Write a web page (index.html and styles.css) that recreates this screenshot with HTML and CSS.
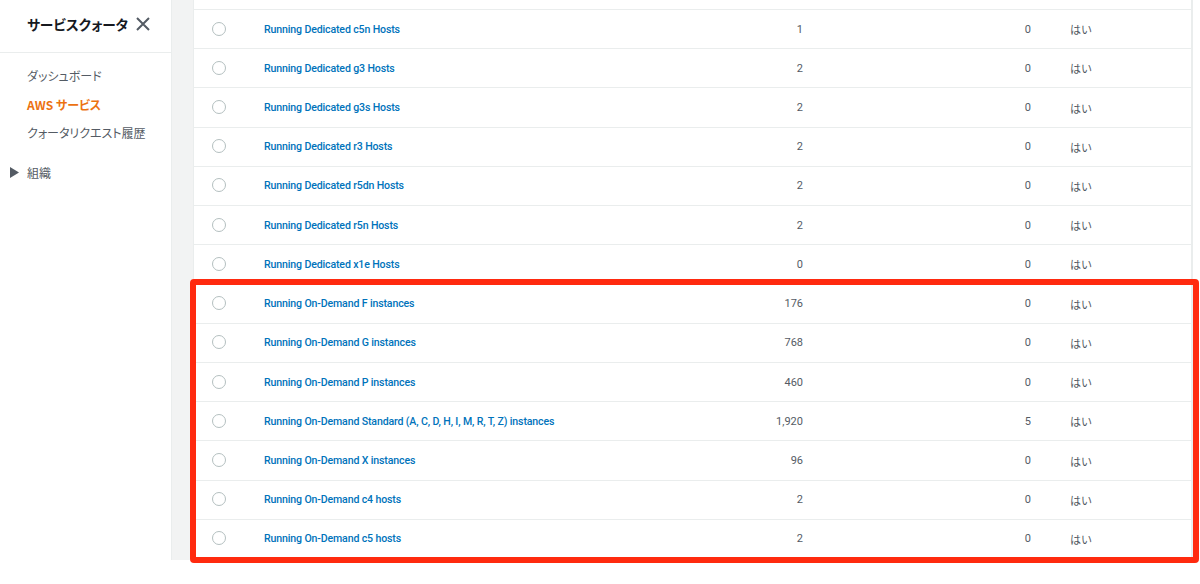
FILE: index.html
```html
<!DOCTYPE html>
<html lang="ja">
<head>
<meta charset="utf-8">
<title>サービスクォータ</title>
<link rel="stylesheet" href="styles.css">
</head>
<body>
<div class="frame">
  <aside class="sidebar">
    <div class="side-head">
      <h2 class="side-title">サービスクォータ</h2>
      <svg class="close" width="14" height="14" viewBox="0 0 14 14"><path d="M1 1L13 13M13 1L1 13" stroke="#545b64" stroke-width="2" fill="none"/></svg>
    </div>
    <nav class="side-nav">
      <a class="nav-item">ダッシュボード</a>
      <a class="nav-item active">AWS サービス</a>
      <a class="nav-item">クォータリクエスト履歴</a>
    </nav>
    <div class="side-group">
      <svg class="caret" width="9" height="11" viewBox="0 0 9 11"><path d="M0 0L9 5.5L0 11Z" fill="#545b64"/></svg>
      <span>組織</span>
    </div>
  </aside>
  <main class="content">
    <div class="card">
      <div class="rows">
        <div class="row"><span class="radio"></span><a class="name">Running Dedicated c5n Hosts</a><span class="num">1</span><span class="num">0</span><span class="adj">はい</span></div>
        <div class="row"><span class="radio"></span><a class="name">Running Dedicated g3 Hosts</a><span class="num">2</span><span class="num">0</span><span class="adj">はい</span></div>
        <div class="row"><span class="radio"></span><a class="name">Running Dedicated g3s Hosts</a><span class="num">2</span><span class="num">0</span><span class="adj">はい</span></div>
        <div class="row"><span class="radio"></span><a class="name">Running Dedicated r3 Hosts</a><span class="num">2</span><span class="num">0</span><span class="adj">はい</span></div>
        <div class="row"><span class="radio"></span><a class="name">Running Dedicated r5dn Hosts</a><span class="num">2</span><span class="num">0</span><span class="adj">はい</span></div>
        <div class="row"><span class="radio"></span><a class="name">Running Dedicated r5n Hosts</a><span class="num">2</span><span class="num">0</span><span class="adj">はい</span></div>
        <div class="row"><span class="radio"></span><a class="name">Running Dedicated x1e Hosts</a><span class="num">0</span><span class="num">0</span><span class="adj">はい</span></div>
        <div class="row"><span class="radio"></span><a class="name">Running On-Demand F instances</a><span class="num">176</span><span class="num">0</span><span class="adj">はい</span></div>
        <div class="row"><span class="radio"></span><a class="name">Running On-Demand G instances</a><span class="num">768</span><span class="num">0</span><span class="adj">はい</span></div>
        <div class="row"><span class="radio"></span><a class="name">Running On-Demand P instances</a><span class="num">460</span><span class="num">0</span><span class="adj">はい</span></div>
        <div class="row"><span class="radio"></span><a class="name">Running On-Demand Standard (A, C, D, H, I, M, R, T, Z) instances</a><span class="num">1,920</span><span class="num">5</span><span class="adj">はい</span></div>
        <div class="row"><span class="radio"></span><a class="name">Running On-Demand X instances</a><span class="num">96</span><span class="num">0</span><span class="adj">はい</span></div>
        <div class="row"><span class="radio"></span><a class="name">Running On-Demand c4 hosts</a><span class="num">2</span><span class="num">0</span><span class="adj">はい</span></div>
        <div class="row"><span class="radio"></span><a class="name">Running On-Demand c5 hosts</a><span class="num">2</span><span class="num">0</span><span class="adj">はい</span></div>
      </div>
    </div>
  </main>
  <div class="highlight"></div>
</div>
</body>
</html>
```

FILE: styles.css
```css
* { box-sizing: border-box; }

html, body {
  margin: 0;
  background: #ffffff;
}

body {
  font-family: Roboto, "Noto Sans CJK JP", sans-serif;
  color: #16191f;
  width: 1200px;
  height: 584px;
  overflow: hidden;
}

.frame {
  position: relative;
  display: flex;
  width: 1193px;
  height: 560px;
}

/* side navigation */
.sidebar {
  width: 172px;
  flex: none;
  background: #ffffff;
  border-right: 1px solid #eaeded;
}

.side-head {
  height: 53px;
  display: flex;
  align-items: center;
  padding: 0 21px 5px 27px;
  border-bottom: 1px solid #eaeded;
}

.side-title {
  margin: 0;
  white-space: nowrap;
  font-family: "Noto Sans CJK JP", sans-serif;
  font-feature-settings: "palt";
  font-size: 13.7px;
  font-weight: 700;
  color: #16191f;
}

.close { display: block; margin: 1px 0 0 auto; flex: none; }

.side-nav {
  display: flex;
  flex-direction: column;
  padding: 9px 0 0 27px;
}

.nav-item {
  font-family: "Noto Sans CJK JP", sans-serif;
  font-feature-settings: "palt";
  font-size: 12px;
  line-height: 28.5px;
  color: #545b64;
}

.nav-item.active {
  color: #ec7211;
  font-weight: 700;
}

.side-group {
  display: flex;
  align-items: center;
  padding: 16px 0 0 10px;
  font-family: "Noto Sans CJK JP", sans-serif;
  font-size: 12px;
  color: #545b64;
  line-height: 18px;
}

.side-group .caret { margin-right: 8px; }

/* main area */
.content {
  flex: 1;
  background: #f2f3f3;
  padding-left: 21px;
  display: flex;
}

.card {
  flex: 1;
  background: #ffffff;
  border-left: 1px solid #eaeded;
  border-right: 2px solid #eaeded;
  padding-top: 9px;
}

.row {
  display: grid;
  grid-template-columns: 70px 439px 100px 228px 1fr;
  align-items: center;
  height: 39.23px;
  border-top: 1px solid #eaeded;
  font-size: 11px;
  color: #545b64;
}

.radio {
  width: 14px;
  height: 14px;
  margin-left: 18px;
  margin-top: -1px;
  border: 1.5px solid #b4bfc0;
  border-radius: 50%;
}

.name {
  color: #0073bb;
  font-size: 10.6px;
  font-weight: 500;
  letter-spacing: -0.15px;
}

.num {
  text-align: right;
}

.adj {
  padding-left: 39px;
  font-family: "Noto Sans CJK JP", sans-serif;
}

/* emphasis frame around the on-demand rows */
.highlight {
  position: absolute;
  left: 190px;
  top: 279px;
  width: 1009px;
  height: 284px;
  border: 6px solid #ff2a0f;
  border-radius: 4px;
}
```
